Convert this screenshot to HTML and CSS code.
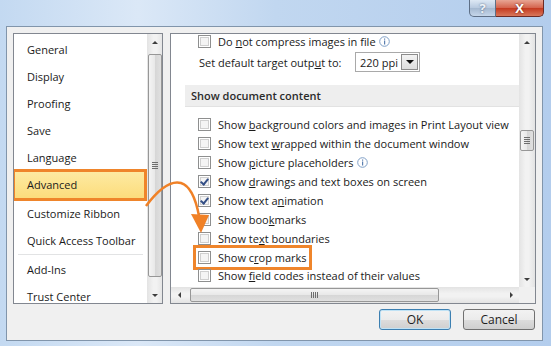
FILE: index.html
```html
<!DOCTYPE html>
<html lang="en">

<head>
    <meta charset="UTF-8">
    <title>Word Options - Advanced</title>
    <link rel="stylesheet" href="styles.css">
</head>

<body>
    <div class="window">
        <div class="titlebar">
            <div class="caption-btn help">?</div>
            <div class="caption-btn close">X</div>
        </div>

        <div class="dialog">
            <div class="panes">
                <div class="categories">
                    <div class="cat-items">
                        <div class="cat">General</div>
                        <div class="cat">Display</div>
                        <div class="cat">Proofing</div>
                        <div class="cat">Save</div>
                        <div class="cat">Language</div>
                        <div class="cat selected">Advanced</div>
                        <div class="cat">Customize Ribbon</div>
                        <div class="cat">Quick Access Toolbar</div>
                        <div class="cat-sep"></div>
                        <div class="cat">Add-Ins</div>
                        <div class="cat">Trust Center</div>
                    </div>
                    <div class="vscroll">
                        <div class="arrow up"></div>
                        <div class="track">
                            <div class="thumb long"><span class="grip"></span></div>
                        </div>
                        <div class="arrow down"></div>
                    </div>
                </div>

                <div class="options">
                    <div class="opt-content">
                        <div class="row first">
                            <span class="box"></span>
                            <span class="label">Do <u>n</u>ot compress images in file</span>
                            <svg class="info" width="11" height="11" viewBox="0 0 11 11">
                                <circle cx="5.5" cy="5.5" r="4.8" fill="#fff" stroke="#7f9fc6" stroke-width="1" />
                                <rect x="5" y="4.5" width="1.2" height="4" fill="#5a7fb0" />
                                <rect x="5" y="2.5" width="1.2" height="1.2" fill="#5a7fb0" />
                            </svg>
                        </div>
                        <div class="row target">
                            <span class="label fixed">Set default target outp<u>u</u>t to:</span>
                            <div class="combo">
                                <span class="combo-text">220 ppi</span>
                                <span class="combo-btn"></span>
                            </div>
                        </div>
                        <div class="section">Show document content</div>
                        <div class="checks">
                            <div class="row"><span class="box"></span><span class="label">Show <u>b</u>ackground colors and images in Print Layout view</span></div>
                            <div class="row"><span class="box"></span><span class="label">Show text <u>w</u>rapped within the document window</span></div>
                            <div class="row">
                                <span class="box"></span><span class="label">Show <u>p</u>icture placeholders</span>
                                <svg class="info" width="11" height="11" viewBox="0 0 11 11">
                                    <circle cx="5.5" cy="5.5" r="4.8" fill="#fff" stroke="#7f9fc6" stroke-width="1" />
                                    <rect x="5" y="4.5" width="1.2" height="4" fill="#5a7fb0" />
                                    <rect x="5" y="2.5" width="1.2" height="1.2" fill="#5a7fb0" />
                                </svg>
                            </div>
                            <div class="row"><span class="box checked"></span><span class="label">Show <u>d</u>rawings and text boxes on screen</span></div>
                            <div class="row"><span class="box checked"></span><span class="label">Show text a<u>n</u>imation</span></div>
                            <div class="row"><span class="box"></span><span class="label">Show boo<u>k</u>marks</span></div>
                            <div class="row"><span class="box"></span><span class="label">Show te<u>x</u>t boundaries</span></div>
                            <div class="row"><span class="marked"><span class="box"></span><span class="label">Show c<u>r</u>op marks</span></span></div>
                            <div class="row"><span class="box"></span><span class="label">Show <u>f</u>ield codes instead of their values</span></div>
                        </div>
                    </div>
                    <div class="vscroll">
                        <div class="arrow up"></div>
                        <div class="track">
                            <div class="thumb short"><span class="grip"></span></div>
                        </div>
                        <div class="arrow down"></div>
                    </div>
                    <div class="hscroll">
                        <div class="arrow left"></div>
                        <div class="htrack">
                            <div class="hthumb"><span class="hgrip"></span></div>
                        </div>
                        <div class="arrow right"></div>
                    </div>
                    <div class="corner"></div>
                </div>
            </div>

            <div class="buttons">
                <button class="btn default">OK</button>
                <button class="btn">Cancel</button>
            </div>
        </div>

        <!-- callout arrow from the Advanced tab to the crop marks option -->
        <svg class="callout" width="551" height="346" viewBox="0 0 551 346">
            <path d="M146 206 C158 190 170 180 181 183 C191 186 196 200 199 216" fill="none" stroke="#f08127" stroke-width="2.5" />
            <polygon points="191,214 209,215 201,233" fill="#f08127" />
        </svg>
    </div>
</body>

</html>
```

FILE: styles.css
```css
body {
    margin: 0;
    font-family: "Open Sans", "Noto Sans", sans-serif;
    font-size: 11px;
    color: #1a1a1a;
}

.window {
    position: relative;
    width: 551px;
    height: 346px;
    background: linear-gradient(to right, #c3d9f1 0%, #dbe8f7 25%, #c1d7f0 50%, #b3cded 100%);
    overflow: hidden;
}

.titlebar {
    height: 26px;
    display: flex;
    justify-content: flex-end;
    padding-right: 7px;
}

.caption-btn {
    height: 17px;
    border: 1px solid #5e6f86;
    border-top: none;
    font-weight: bold;
    color: #fff;
    text-align: center;
    line-height: 16px;
    box-sizing: border-box;
}

.help {
    width: 27px;
    border-radius: 0 0 0 5px;
    background: linear-gradient(#dde8f4, #b7c9df 50%, #a4b8d0 51%, #c5d6ea);
    color: #eef3f8;
    text-shadow: 0 0 2px #4c5e78;
    font-size: 13px;
}

.close {
    width: 48px;
    border-left: none;
    border-color: #6d2a24;
    border-radius: 0 0 5px 0;
    background: linear-gradient(#e8a593, #d4624b 50%, #c4391f 51%, #d8775b);
    text-shadow: 0 0 2px #5a1a10;
    font-size: 13px;
}

.dialog {
    margin-left: 6px;
    width: 537px;
    height: 315px;
    box-sizing: border-box;
    border: 1px solid #8195ab;
    background: #f0f0f0;
    padding: 6px 6px 0 6px;
}

.panes {
    display: flex;
    gap: 7px;
    height: 271px;
}

/* left category list */
.categories {
    width: 150px;
    box-sizing: border-box;
    border: 1px solid #828790;
    background: #fff;
    display: flex;
    overflow: hidden;
}

.cat-items {
    flex: 1;
    padding-top: 2px;
}

.cat {
    height: 27px;
    line-height: 27px;
    padding-left: 13px;
    white-space: nowrap;
}

.cat.selected {
    height: 32px;
    line-height: 26px;
    margin: -2px 0 -1px -2px;
    width: 135px;
    box-sizing: border-box;
    border: 3px solid #ef852b;
    padding-left: 12px;
    background: linear-gradient(#fdeaa2, #fcdc7c);
}

.cat-sep {
    height: 1px;
    margin: 0 4px 1px 4px;
    background: #e2e3e4;
}

.vscroll {
    width: 16px;
    display: flex;
    flex-direction: column;
    background: linear-gradient(to right, #e3e3e3, #f2f2f2 40%, #f2f2f2 60%, #e3e3e3);
}

.arrow {
    width: 16px;
    height: 16px;
    position: relative;
    flex: none;
}

.arrow::after {
    content: "";
    position: absolute;
    width: 0;
    height: 0;
}

.arrow.up::after {
    left: 5px;
    top: 7px;
    border-left: 3px solid transparent;
    border-right: 3px solid transparent;
    border-bottom: 3px solid #3e3e3e;
}

.arrow.down::after {
    left: 5px;
    top: 7px;
    border-left: 3px solid transparent;
    border-right: 3px solid transparent;
    border-top: 3px solid #3e3e3e;
}

.arrow.left::after {
    left: 7px;
    top: 5px;
    border-top: 3px solid transparent;
    border-bottom: 3px solid transparent;
    border-right: 3px solid #3e3e3e;
}

.arrow.right::after {
    left: 7px;
    top: 5px;
    border-top: 3px solid transparent;
    border-bottom: 3px solid transparent;
    border-left: 3px solid #3e3e3e;
}

.track {
    flex: 1;
    display: flex;
    flex-direction: column;
}

.thumb {
    margin: 0 1px;
    border: 1px solid #979797;
    border-radius: 2px;
    background: linear-gradient(to right, #f4f4f4, #e8e8e8 50%, #d6d6d6 51%, #e0e0e0);
    display: flex;
    align-items: center;
    justify-content: center;
}

.thumb.long {
    margin-top: 4px;
    height: 221px;
}

.thumb.short {
    margin-top: 80px;
    height: 19px;
}

.grip {
    width: 6px;
    height: 7px;
    background: repeating-linear-gradient(#6e6e6e 0 1px, transparent 1px 2px);
}

/* right option panel */
.options {
    width: 366px;
    box-sizing: border-box;
    border: 1px solid #828790;
    background: #fff;
    display: grid;
    grid-template-columns: 1fr 16px;
    grid-template-rows: 1fr 16px;
    overflow: hidden;
}

.opt-content {
    overflow: hidden;
    padding-left: 27px;
}

.row {
    height: 18.875px;
    display: flex;
    align-items: center;
    white-space: nowrap;
}

.row.first {
    margin-top: -2px;
    height: 19px;
}

.box {
    width: 13px;
    height: 13px;
    flex: none;
    box-sizing: border-box;
    border: 1px solid #8e8f8f;
    background: #f4f4f4;
    box-shadow: inset 0 0 0 1px #fff, inset 0 0 0 2px #cfcfcf;
    margin-right: 7px;
    position: relative;
}

.box.checked::after {
    content: "";
    position: absolute;
    left: 3px;
    top: 1px;
    width: 3px;
    height: 6px;
    border-right: 2px solid #344f86;
    border-bottom: 2px solid #344f86;
    transform: rotate(40deg);
}

.info {
    margin-left: 3px;
}

.row.target {
    height: 22px;
    padding-left: 1px;
}

.label.fixed {
    width: 156px;
}

.combo {
    width: 65px;
    height: 20px;
    box-sizing: border-box;
    border: 1px solid #a9a9a9;
    display: flex;
    align-items: center;
}

.combo-text {
    flex: 1;
    padding-left: 4px;
}

.combo-btn {
    width: 17px;
    height: 16px;
    margin-right: 1px;
    box-sizing: border-box;
    border: 1px solid #8c8c8c;
    background: linear-gradient(#f3f3f3, #dedede);
    position: relative;
}

.combo-btn::after {
    content: "";
    position: absolute;
    left: 4px;
    top: 5px;
    border-left: 4px solid transparent;
    border-right: 4px solid transparent;
    border-top: 4px solid #111;
}

.section {
    margin: 12px 0 8px -13px;
    height: 22px;
    line-height: 21px;
    padding-left: 6px;
    background: #eeeeee;
    border-bottom: 1px solid #e2e2e2;
    box-sizing: border-box;
    font-weight: 600;
    color: #2b2b2b;
}

.checks {
    padding-top: 0.5px;
}

.marked {
    display: flex;
    align-items: center;
    outline: 3px solid #ef852b;
    outline-offset: 2px;
}

.hscroll {
    display: flex;
    background: linear-gradient(#e3e3e3, #f2f2f2 40%, #f2f2f2 60%, #e3e3e3);
}

.htrack {
    flex: 1;
    display: flex;
}

.hthumb {
    margin: 1px 0 1px 3px;
    width: 247px;
    border: 1px solid #979797;
    border-radius: 2px;
    background: linear-gradient(#f4f4f4, #e8e8e8 50%, #d6d6d6 51%, #e0e0e0);
    display: flex;
    align-items: center;
    justify-content: center;
}

.hgrip {
    width: 7px;
    height: 6px;
    background: repeating-linear-gradient(to right, #6e6e6e 0 1px, transparent 1px 2px);
}

.corner {
    background: #f0f0f0;
}

/* bottom buttons */
.buttons {
    display: flex;
    justify-content: flex-end;
    gap: 12px;
    margin-top: 5px;
    padding-right: 1px;
}

.btn {
    width: 72px;
    height: 21px;
    font-family: inherit;
    font-size: 12px;
    color: #1e1e1e;
    border: 1px solid #707070;
    border-radius: 3px;
    background: linear-gradient(#f2f2f2, #ebebeb 50%, #dddddd 51%, #cfcfcf);
    padding: 0;
}

.btn.default {
    border-color: #3c7fb1;
    box-shadow: inset 0 0 0 1px #bfe2f5;
}

.callout {
    position: absolute;
    left: 0;
    top: 0;
    pointer-events: none;
}
```
